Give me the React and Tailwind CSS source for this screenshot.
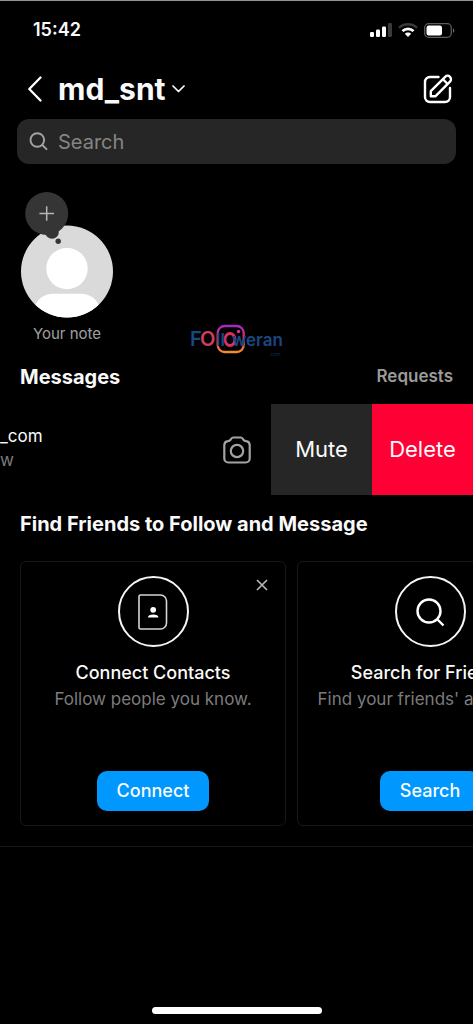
import { useState } from 'react';
import { clsx } from 'clsx';

const suggestions = [
  { id: 'contacts', title: 'Connect Contacts', text: 'Follow people you know.', action: 'Connect', icon: ContactsIcon, closable: true },
  { id: 'search', title: 'Search for Friends', text: "Find your friends' accounts.", action: 'Search', icon: SearchFriendsIcon },
];

function ContactsIcon() {
  return (
    <svg width="30" height="36" viewBox="0 0 30 36" fill="none" aria-hidden="true">
      <path d="M2.5 1H22.5A6 6 0 0 1 28.5 7V29A6 6 0 0 1 22.5 35H2.5A1.5 1.5 0 0 1 1 33.5V2.5A1.5 1.5 0 0 1 2.5 1Z" stroke="#d4d4d4" strokeWidth="1.6" />
      <circle cx="15.2" cy="15.8" r="2.9" fill="#fff" />
      <path d="M10 23.5C10 21.5 12 20.6 15.2 20.6S20.4 21.500 20.4 23.5Z" fill="#fff" />
    </svg>
  );
}

function SearchFriendsIcon() {
  return (
    <svg width="30" height="30" viewBox="0 0 30 30" fill="none" stroke="#fff" strokeWidth="2.4" aria-hidden="true">
      <circle cx="14" cy="14" r="11.5" />
      <path d="M22 22L28.5 28.5" />
    </svg>
  );
}

function StatusIcons() {
  return (
    <div className="flex items-center gap-[6px]">
      <svg width="22" height="14" viewBox="0 0 22 14" fill="#fff" aria-hidden="true">
        <rect x="0" y="9" width="4" height="5" rx="1.2" />
        <rect x="6" y="6.5" width="4" height="7.5" rx="1.2" />
        <rect x="12" y="3.5" width="4" height="10.5" rx="1.2" />
        <rect x="18" y="0" width="4" height="14" rx="1.2" fill="#3a3a3a" />
      </svg>
      <svg width="20" height="14" viewBox="0 0 20 14" fill="none" aria-hidden="true">
        <path d="M1 4.800C5.8 0.2 14.2 0.2 19 4.8" stroke="#3a3a3a" strokeWidth="2.5" />
        <path d="M4.500 8.200C7.500 5 12.500 5 15.5 8.2" stroke="#fff" strokeWidth="2.7" />
        <path d="M6.800 10.700C8.500 9 11.500 9 13.2 10.7L10 14Z" fill="#fff" />
      </svg>
      <svg width="31" height="15" viewBox="0 0 31 15" fill="none" aria-hidden="true">
        <rect x="0.7" y="0.7" width="26.6" height="13.6" rx="4" stroke="#5c5c5c" strokeWidth="1.3" />
        <rect x="2.5" y="2.5" width="15.5" height="10" rx="2.2" fill="#fff" />
        <path d="M29 5.2C30.8 6 30.8 9 29 9.8Z" fill="#6b6b6b" />
      </svg>
    </div>
  );
}

function ComposeIcon() {
  return (
    <svg width="30" height="30" viewBox="0 0 30 30" fill="none" stroke="#fff" strokeWidth="2.4" strokeLinejoin="round" aria-hidden="true">
      <path d="M15.5 3H7A5 5 0 0 0 2 8V23A5 5 0 0 0 7 28H22A5 5 0 0 0 27 23V14" strokeLinecap="round" />
      <path d="M7.8 22.2V17.2L22.2 2.8A3.3 3.3 0 0 1 27 7.6L12.6 22.2Z" />
      <path d="M19.8 5.2L24.6 10" />
    </svg>
  );
}

function CameraIcon() {
  return (
    <svg width="28" height="28" viewBox="0 0 28 28" fill="none" stroke="#a3a3a3" strokeWidth="2.2" strokeLinejoin="round" aria-hidden="true">
      <path d="M10 1.5H18C19.2 1.5 19.9 2.8 20.6 3.9C21.2 4.8 22 5 23.2 5.2C25.6 5.5 26.7 7 26.7 9.3V22.5A4 4 0 0 1 22.7 26.5H5.3A4 4 0 0 1 1.3 22.5V9.3C1.3 7 2.4 5.5 4.8 5.2C6 5 6.8 4.8 7.4 3.9C8.1 2.8 8.8 1.5 10 1.5Z" />
      <circle cx="14" cy="15" r="6.2" />
    </svg>
  );
}

function Watermark() {
  return (
    <svg width="96" height="30" viewBox="0 0 96 30" role="img" aria-label="Followeran.com" className="mx-auto block overflow-visible">
      <defs>
        <linearGradient id="frame" x1="0" y1="0" x2="0" y2="1">
          <stop offset="0" stopColor="#a22ac0" />
          <stop offset="0.5" stopColor="#e0305f" />
          <stop offset="1" stopColor="#f98a32" />
        </linearGradient>
      </defs>
      <rect x="28.7" y="2" width="26" height="26" rx="7" fill="none" stroke="url(#frame)" strokeWidth="2.3" />
      <circle cx="49.5" cy="7.5" r="1.7" fill="#d631a0" />
      <ellipse cx="41" cy="15.5" rx="5" ry="6" fill="none" stroke="#d92f68" strokeWidth="2.8" />
      <g fontFamily="Inter, sans-serif" fontSize="17" fontWeight="600" fill="#194783">
        <text x="1" y="22" fontSize="20">F</text>
        <text x="11" y="22" fontSize="20" fill="#d13c62">O</text>
        <text x="27" y="22">ll</text>
        <text x="43" y="22">weran</text>
      </g>
      <text x="80" y="32" fontFamily="Inter, sans-serif" fontSize="5" fill="#12305c">.com</text>
    </svg>
  );
}

function SuggestionCard({ item, onClose }) {
  const Icon = item.icon;
  return (
    <article className="relative flex h-[265px] w-[266px] shrink-0 flex-col items-center rounded-md border border-[#181818] py-[14px]">
      {item.closable && (
        <button onClick={onClose} aria-label="Dismiss" className="absolute top-4 right-4 p-px">
          <svg width="12" height="12" viewBox="0 0 12 12" fill="none" stroke="#b5b5b5" strokeWidth="1.7" aria-hidden="true">
            <path d="M1 1L11 11M11 1L1 11" />
          </svg>
        </button>
      )}
      <div className="flex size-[71px] items-center justify-center rounded-full border-2 border-neutral-100">
        <Icon />
      </div>
      <h3 className="mt-3 text-lg leading-7 font-medium whitespace-nowrap">{item.title}</h3>
      <p className="text-[17px] leading-6 whitespace-nowrap text-[#7c7c7c]">{item.text}</p>
      <button className="mt-auto h-10 rounded-[10px] bg-[#0098fe] px-5 text-lg font-medium">{item.action}</button>
    </article>
  );
}

export default function App() {
  const [query, setQuery] = useState('');
  const [dismissed, setDismissed] = useState([]);

  const visible = suggestions.filter(s => !dismissed.includes(s.id));

  return (
    <div className="flex min-h-screen flex-col overflow-hidden border-t border-[#8f9491] bg-black font-[Inter,sans-serif] text-neutral-50">
      {/* Status bar */}
      <div className="flex h-[58px] items-center justify-between pr-[18px] pl-[33px]">
        <span className="text-lg font-semibold">15:42</span>
        <StatusIcons />
      </div>

      <header className="flex h-[60px] items-center px-5">
        <button aria-label="Back" className="px-2">
          <svg width="14" height="26" viewBox="0 0 14 26" fill="none" stroke="#fff" strokeWidth="2.3" strokeLinecap="round" strokeLinejoin="round" aria-hidden="true">
            <path d="M12.5 1.5L1.3 13L12.5 24.5" />
          </svg>
        </button>
        <button className="ml-2 flex items-center gap-[6px]">
          <span className="text-3xl font-bold">md_snt</span>
          <svg width="13" height="8" viewBox="0 0 13 8" fill="none" stroke="#fff" strokeWidth="1.7" strokeLinecap="round" strokeLinejoin="round" aria-hidden="true">
            <path d="M1 1L6.5 6.5L12 1" />
          </svg>
        </button>
        <button aria-label="New message" className="ml-auto">
          <ComposeIcon />
        </button>
      </header>

      <label className="mx-[17px] flex h-[45px] items-center gap-[10px] rounded-xl bg-[#262626] px-3">
        <svg width="19" height="19" viewBox="0 0 19 19" fill="none" stroke="#a3a3a3" strokeWidth="1.9" strokeLinecap="round" aria-hidden="true">
          <circle cx="8.3" cy="8" r="6.8" />
          <path d="M13.3 13L17.5 17.2" />
        </svg>
        <input
          type="text"
          aria-label="Search"
          placeholder="Search"
          value={query}
          onChange={(e) => setQuery(e.target.value)}
          className="min-w-0 flex-1 bg-transparent text-xl outline-none placeholder:text-[#858585]"
        />
      </label>

      {/* Notes */}
      <button className="mt-7 ml-5 flex w-[94px] flex-col items-center">
        <svg width="94" height="128" viewBox="0 0 94 128" aria-hidden="true">
          <defs>
            <clipPath id="avatar">
              <circle cx="47" cy="79.5" r="46" />
            </clipPath>
          </defs>
          <circle cx="47" cy="79.5" r="46" fill="#dadada" />
          <g clipPath="url(#avatar)" fill="#fff">
            <circle cx="47" cy="76.5" r="20.7" />
            <path d="M14 128V116C17 107 24 101.7 33 101.7H61C70 101.7 77 107 80 116V128Z" />
          </g>
          <g fill="#353535">
            <circle cx="26.7" cy="21.5" r="21.5" />
            <circle cx="32" cy="40" r="6.8" />
            <circle cx="38.2" cy="49.3" r="2.7" />
          </g>
          <path d="M26.7 14.2V28.8M19.4 21.5H34" stroke="#b5b5b5" strokeWidth="1.5" />
        </svg>
        <span className="mt-1 text-[15px] leading-5 whitespace-nowrap text-[#a0a0a0]">Your note</span>
      </button>

      <div className="-mt-5">
        <Watermark />
      </div>

      <div className="mt-[7px] flex h-8 items-center justify-between px-5">
        <h2 className="text-xl font-bold">Messages</h2>
        <button className="text-[17px] font-semibold text-[#9b9b9b]">Requests</button>
      </div>

      {/* Swiped conversation */}
      <div className="mt-[11px] flex h-[91px] items-stretch">
        <div className="flex flex-1 flex-col justify-center pb-1">
          <span className="text-[17px] leading-6">_com</span>
          <span className="text-[17px] leading-6 text-[#7c7c7c]">w</span>
        </div>
        <button aria-label="Camera" className="px-5">
          <CameraIcon />
        </button>
        <button className="w-[101px] bg-[#262626] text-[22px]">Mute</button>
        <button className="w-[101px] bg-[#ff0034] text-[22px]">Delete</button>
      </div>

      <section className="border-b border-[#181818] pb-5">
        <h2 className="mt-[15px] ml-5 text-xl leading-7 font-bold">Find Friends to Follow and Message</h2>
        <div className={clsx('mt-[23px] flex gap-[11px] overflow-hidden pl-5', !visible.length && 'hidden')}>
          {visible.map(item => (
            <SuggestionCard key={item.id} item={item} onClose={() => setDismissed([...dismissed, item.id])} />
          ))}
        </div>
      </section>

      {/* Home indicator */}
      <div className="mx-auto mt-auto mb-[10px] h-[7px] w-[170px] rounded-full bg-white" />
    </div>
  );
}
